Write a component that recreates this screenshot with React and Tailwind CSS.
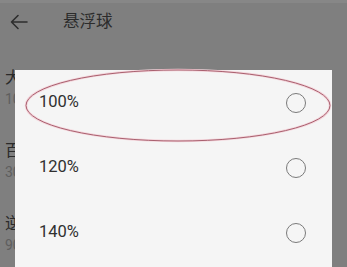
import React from "react";

const OPTIONS = ["100%", "120%", "140%"];

const BEHIND = [
  { title: "大小", sub: "100%" },
  { title: "百分比", sub: "30%" },
  { title: "逆光模式", sub: "90%" },
];

export default function App() {
  return (
    <div
      className="relative w-[347px] h-[267px] overflow-hidden bg-[#7f7f7f]"
      style={{ fontFamily: "Roboto, 'Noto Sans CJK SC', sans-serif" }}
    >
      <div className="h-[3px] bg-[#878787]" />
      {/* header */}
      <div className="flex items-center h-[38px] pl-[10px]">
        <svg width="18" height="16" viewBox="0 0 18 16" fill="none" stroke="#2e2e2e" strokeWidth="1.6" strokeLinecap="round" strokeLinejoin="round">
          <path d="M17 8H1.5M8 1.5L1.5 8L8 14.5" />
        </svg>
        <span className="ml-[35px] text-[16.5px] text-[#2c2c2c]">悬浮球</span>
      </div>

      {/* page list behind the dim, only its left edge shows */}
      <div className="flex flex-col w-[15px] overflow-hidden pl-[5px] pt-[27px] whitespace-nowrap">
        {BEHIND.map((b) => (
          <div key={b.title} className="flex flex-col h-[73px]">
            <span className="text-[16px] leading-[20px] text-[#2a2a2a]">{b.title}</span>
            <span className="text-[14px] leading-[20px] mt-[1px] text-[#5e5e5e]">{b.sub}</span>
          </div>
        ))}
      </div>

      {/* dialog */}
      <div className="absolute left-[15px] top-[70px] w-[317px] h-[210px] bg-[#f5f5f5]">
        {OPTIONS.map((o) => (
          <div key={o} className="flex items-center justify-between h-[65px] pl-[24px] pr-[26px]">
            <span className="text-[16.5px] text-[#303030]">{o}</span>
            <span className="w-[20px] h-[20px] rounded-full border-[1.5px] border-[#7a7a7a]" />
          </div>
        ))}
      </div>

      {/* hand-drawn highlight */}
      <svg className="absolute left-0 top-0 pointer-events-none" width="347" height="267">
        <ellipse cx="178" cy="105.5" rx="152" ry="35.5" fill="none" stroke="#f4d6dc" strokeWidth="2.6" />
        <ellipse cx="178" cy="105.5" rx="152" ry="35.5" fill="none" stroke="#a9606f" strokeWidth="1" />
      </svg>
    </div>
  );
}
